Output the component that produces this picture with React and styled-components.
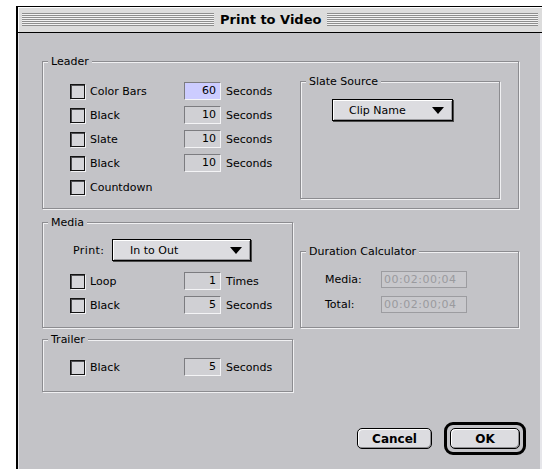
import React from "react";
import styled, { createGlobalStyle } from "styled-components";

const GlobalStyle = createGlobalStyle`
  html, body {
    margin: 0;
    padding: 0;
    background: #ffffff;
    overflow: hidden;
  }
  body {
    font-family: "DejaVu Sans", "Liberation Sans", sans-serif;
    font-size: 11px;
    color: #000;
  }
`;

const BG = "#c3c3c7";

const Window = styled.div`
  margin: 6px 0 0 16px;
  width: 526px;
  height: 470px;
  box-sizing: border-box;
  border-top: 1px solid #000;
  border-left: 2px solid #000;
  background: ${BG};
  display: flex;
  flex-direction: column;
`;

const TitleBar = styled.div`
  height: 25px;
  flex: none;
  display: flex;
  align-items: center;
  gap: 5px;
  padding: 0 4px;
  background: #dcdcdc;
  border-bottom: 1px solid #000;
  box-shadow: inset 1px 1px 0 #ffffff;
`;

const Stripes = styled.div`
  flex: ${(p) => (p.$fixed ? `0 0 ${p.$fixed}px` : "1")};
  height: 13px;
  background: repeating-linear-gradient(
    to bottom,
    #8e8e8e 0 1px,
    #f2f2f2 1px 2px
  );
`;

const Title = styled.div`
  font-weight: bold;
  font-size: 13px;
  line-height: 16px;
  padding: 0 1px;
`;

const Content = styled.div`
  flex: 1;
  padding: 22px 0 0 24px;
  box-shadow: inset 1px 0 0 #e6e6ea, inset -2px 0 0 #e6e6ea;
`;

const Group = styled.fieldset`
  margin: 0;
  padding: 0;
  min-width: 0;
  width: ${(p) => (p.$width ? `${p.$width}px` : "auto")};
  box-sizing: border-box;
  border: 1px solid #8c8c90;
  box-shadow: inset 1px 1px 0 #f0f0f2, 1px 1px 0 #f0f0f2;
  align-self: ${(p) => p.$align || "stretch"};
  grid-column: ${(p) => p.$col || "auto"};
`;

const Legend = styled.legend`
  margin-left: 5px;
  padding: 0 3px;
  font-size: 11px;
  line-height: 13px;
  background: ${BG};
`;

const GroupBody = styled.div`
  padding: ${(p) => p.$pad};
  height: ${(p) => (p.$h ? `${p.$h}px` : "auto")};
  box-sizing: border-box;
`;

const LeaderGrid = styled.div`
  display: grid;
  grid-template-columns: 230px 200px;
  align-items: start;
`;

const OptionGrid = styled.div`
  display: grid;
  grid-template-columns: 109px 37px auto;
  grid-auto-rows: 24px;
  column-gap: 5px;
  align-items: center;
  margin-top: ${(p) => p.$top || 0}px;
`;

const CheckRow = styled.label`
  display: flex;
  align-items: center;
  gap: 5px;
  grid-column: 1;
`;

const Box = styled.span`
  width: 15px;
  height: 15px;
  box-sizing: border-box;
  border: 1px solid #141414;
  background: #d6d6da;
  box-shadow: inset 1px 1px 0 #505054, 1px 1px 0 #f2f2f4;
`;

const NumField = styled.div`
  height: 18px;
  box-sizing: border-box;
  border: 1px solid;
  border-color: #7c7c80 #f4f4f6 #f4f4f6 #7c7c80;
  background: ${(p) => (p.$active ? "#ccccff" : "#d0d0d4")};
  text-align: right;
  padding-right: 4px;
  line-height: 16px;
`;

const Popup = styled.div`
  width: ${(p) => p.$w}px;
  height: 22px;
  box-sizing: border-box;
  display: flex;
  align-items: center;
  justify-content: space-between;
  padding: 0 8px 0 ${(p) => p.$indent}px;
  border: 1px solid #000;
  background: #dcdce0;
  box-shadow: inset 1px 1px 0 #ffffff, inset -1px -1px 0 #9a9a9e,
    1px 1px 0 #4a4a4a;
`;

const Arrow = styled.svg`
  width: 12px;
  height: 7px;
  display: block;
`;

const BottomGrid = styled.div`
  display: grid;
  width: 477px;
  grid-template-columns: 251px 219px;
  column-gap: 7px;
  row-gap: 5px;
  margin-top: 7px;
`;

const PrintRow = styled.div`
  display: flex;
  align-items: center;
  padding-left: 3px;
`;

const PrintLabel = styled.span`
  width: 39px;
  letter-spacing: 0.4px;
`;

const CalcGrid = styled.div`
  display: grid;
  grid-template-columns: 56px 86px;
  grid-auto-rows: 17px;
  row-gap: 8px;
  align-items: center;
`;

const CalcField = styled.div`
  height: 17px;
  box-sizing: border-box;
  border: 1px solid #9c9ca0;
  background: #c8c8cc;
  color: #9a9a9e;
  padding-left: 2px;
  line-height: 15px;
  letter-spacing: 0.5px;
`;

const ButtonRow = styled.div`
  width: 484px;
  display: flex;
  justify-content: flex-end;
  align-items: center;
  gap: 12px;
  margin-top: 30px;
`;

const Button = styled.div`
  width: ${(p) => p.$w}px;
  height: 21px;
  box-sizing: border-box;
  border: 1px solid #000;
  border-radius: 5px;
  background: #dcdce0;
  box-shadow: inset 1px 1px 0 #ffffff, inset -1px -1px 0 #8e8e92;
  display: flex;
  align-items: center;
  justify-content: center;
  font-weight: bold;
  font-size: 12px;
`;

const DefaultRing = styled.div`
  padding: 3px;
  border: 3px solid #000;
  border-radius: 9px;
  background: ${BG};
`;

function DownArrow() {
  return (
    <Arrow viewBox="0 0 12 7">
      <path d="M0 0 H12 L6 7 Z" fill="#000" />
    </Arrow>
  );
}

function Option({ label, value, unit, active, noField }) {
  return (
    <>
      <CheckRow>
        <Box />
        <span>{label}</span>
      </CheckRow>
      {!noField && <NumField $active={active}>{value}</NumField>}
      {!noField && <span>{unit}</span>}
    </>
  );
}

export default function App() {
  return (
    <>
      <GlobalStyle />
      <Window>
        <TitleBar>
          <Stripes $fixed={192} />
          <Title>Print to Video</Title>
          <Stripes />
        </TitleBar>
        <Content>
          <Group $width={477}>
            <Legend>Leader</Legend>
            <GroupBody $pad="7px 0 9px 27px">
              <LeaderGrid>
                <OptionGrid $top={4}>
                  <Option label="Color Bars" value="60" unit="Seconds" active />
                  <Option label="Black" value="10" unit="Seconds" />
                  <Option label="Slate" value="10" unit="Seconds" />
                  <Option label="Black" value="10" unit="Seconds" />
                  <Option label="Countdown" noField />
                </OptionGrid>
                <Group>
                  <Legend>Slate Source</Legend>
                  <GroupBody $pad="11px 0 0 31px" $h={107}>
                    <Popup $w={121} $indent={16}>
                      <span>Clip Name</span>
                      <DownArrow />
                    </Popup>
                  </GroupBody>
                </Group>
              </LeaderGrid>
            </GroupBody>
          </Group>

          <BottomGrid>
            <Group $col="1">
              <Legend>Media</Legend>
              <GroupBody $pad="10px 0 10px 27px">
                <PrintRow>
                  <PrintLabel>Print:</PrintLabel>
                  <Popup $w={139} $indent={17}>
                    <span>In to Out</span>
                    <DownArrow />
                  </Popup>
                </PrintRow>
                <OptionGrid $top={8}>
                  <Option label="Loop" value="1" unit="Times" />
                  <Option label="Black" value="5" unit="Seconds" />
                </OptionGrid>
              </GroupBody>
            </Group>

            <Group $col="2" $align="end">
              <Legend>Duration Calculator</Legend>
              <GroupBody $pad="13px 0 14px 24px">
                <CalcGrid>
                  <span>Media:</span>
                  <CalcField>00:02:00;04</CalcField>
                  <span>Total:</span>
                  <CalcField>00:02:00;04</CalcField>
                </CalcGrid>
              </GroupBody>
            </Group>

            <Group $col="1">
              <Legend>Trailer</Legend>
              <GroupBody $pad="9px 0 12px 27px">
                <OptionGrid>
                  <Option label="Black" value="5" unit="Seconds" />
                </OptionGrid>
              </GroupBody>
            </Group>
          </BottomGrid>

          <ButtonRow>
            <Button $w={75}>Cancel</Button>
            <DefaultRing>
              <Button $w={70}>OK</Button>
            </DefaultRing>
          </ButtonRow>
        </Content>
      </Window>
    </>
  );
}
